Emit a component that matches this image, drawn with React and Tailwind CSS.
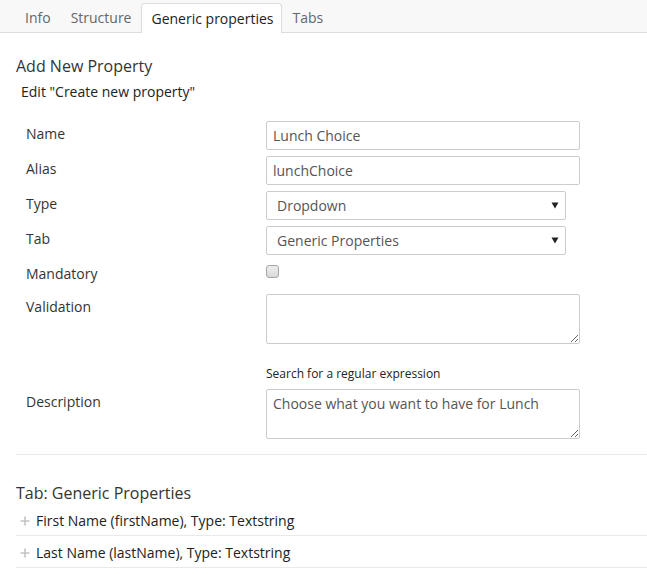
import React from "react";

function Tab({ label, active, extra = "" }) {
  if (active) {
    return (
      <div className={"h-[30px] -mb-px pl-[9px] pr-[7px] border-x border-t border-[#ddd] bg-white rounded-t-[4px] flex items-center text-[#222] leading-[20px] " + extra}>
        {label}
      </div>
    );
  }
  return (
    <div className={"h-[29px] px-[10px] flex items-center text-[#666] leading-[20px] " + extra}>
      {label}
    </div>
  );
}

function Label({ children }) {
  return <div className="w-[240px] shrink-0 pt-[3px] leading-[20px] text-[#343434]">{children}</div>;
}

function TextInput({ value }) {
  return (
    <input
      readOnly
      value={value}
      className="h-[29px] w-[314px] border border-[#ccc] rounded-[2px] px-[6px] text-[#555] leading-[20px] outline-none"
    />
  );
}

function Select({ value }) {
  return (
    <div className="h-[29px] w-[300px] border border-[#ccc] rounded-[2px] pl-[10px] pr-[5px] flex items-center justify-between text-[#555] leading-[20px]">
      <span>{value}</span>
      <svg width="8" height="7" viewBox="0 0 8 7" className="mr-[1px]">
        <path d="M0.5 0.5 H7.5 L4 6.5 Z" fill="#222" />
      </svg>
    </div>
  );
}

function Plus() {
  return (
    <svg width="10" height="10" viewBox="0 0 10 10">
      <path d="M5 0.5 V9.5 M0.5 5 H9.5" stroke="#c4c4c4" strokeWidth="1.6" />
    </svg>
  );
}

export default function App() {
  return (
    <div className="font-['Open_Sans',sans-serif] text-[14px] text-[#343434] bg-white min-h-[578px]">
      <div className="h-[33px] bg-[#f8f8f8] border-b border-[#ddd] flex items-end pl-[15px] gap-[1px]">
        <Tab label="Info" />
        <Tab label="Structure" extra="-ml-[1px]" />
        <Tab label="Generic properties" active extra="-ml-[1px]" />
        <Tab label="Tabs" />
      </div>

      <div className="pl-[16px]">
        <div className="mt-[22px] text-[16px] leading-[22px] text-[#343434]">Add New Property</div>
        <div className="mt-[5px] ml-[5px] leading-[20px] text-[#222]">Edit "Create new property"</div>

        <div className="mt-[19px] pl-[10px] flex flex-col">
          <div className="flex mb-[6px]">
            <Label>Name</Label>
            <TextInput value="Lunch Choice" />
          </div>
          <div className="flex mb-[6px]">
            <Label>Alias</Label>
            <TextInput value="lunchChoice" />
          </div>
          <div className="flex mb-[6px]">
            <Label>Type</Label>
            <Select value="Dropdown" />
          </div>
          <div className="flex mb-[6px]">
            <Label>Tab</Label>
            <Select value="Generic Properties" />
          </div>
          <div className="flex h-[33px]">
            <Label>Mandatory</Label>
            <div className="mt-[4px] w-[13px] h-[13px] rounded-[3px] border border-[#a5a5a5] bg-gradient-to-b from-[#ededed] to-[#dadada]" />
          </div>
          <div className="flex">
            <Label>Validation</Label>
            <div className="flex flex-col">
              <textarea
                readOnly
                value=""
                className="h-[50px] w-[314px] border border-[#ccc] rounded-[2px] px-[6px] py-[4px] leading-[20px] text-[#555] outline-none"
              />
              <div className="mt-[21px] mb-[7px] text-[12px] leading-[17px] text-[#222]">
                Search for a regular expression
              </div>
            </div>
          </div>
          <div className="flex">
            <Label>Description</Label>
            <textarea
              readOnly
              value="Choose what you want to have for Lunch"
              className="h-[50px] w-[314px] border border-[#ccc] rounded-[2px] px-[6px] py-[4px] leading-[20px] text-[#555] outline-none"
            />
          </div>
        </div>

        <div className="mt-[15px] border-t border-[#e9e9e9]" />

        <div className="mt-[27px] text-[16px] leading-[22px] text-[#343434]">Tab: Generic Properties</div>
        <div className="flex items-center gap-[6px] pl-[4px] pt-[7px] pb-[4px] leading-[20px] border-b border-[#e9e9e9] text-[#222]">
          <Plus />
          <span>First Name (firstName), Type: Textstring</span>
        </div>
        <div className="flex items-center gap-[6px] pl-[4px] pt-[7px] pb-[4px] leading-[20px] border-b border-[#e9e9e9] text-[#222]">
          <Plus />
          <span>Last Name (lastName), Type: Textstring</span>
        </div>
      </div>
    </div>
  );
}
